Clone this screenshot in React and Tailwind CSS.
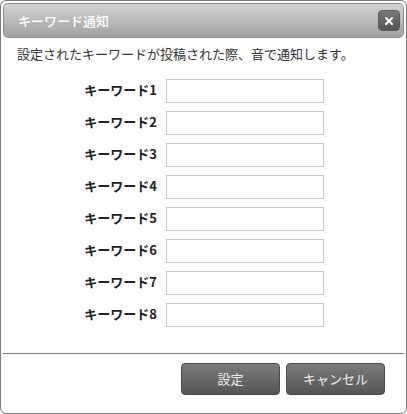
import { X } from 'lucide-react';

const keywords = [1, 2, 3, 4, 5, 6, 7, 8];

const App = () => {
  return (
    <div
      className="flex h-[414px] w-[407px] flex-col rounded-[6px] border border-[#7a7a7a] bg-white p-[2px] text-[#333]"
      style={{ fontFamily: '"Noto Sans CJK JP", "Noto Sans", sans-serif' }}
    >
      {/* ヘッダー */}
      <div className="flex h-[35px] items-center justify-between rounded-[5px] border border-[#8e8e8e] bg-gradient-to-b from-[#d2d2d2] to-[#a2a2a2] pl-[14px] pr-[3px]">
        <span className="text-[13px] font-medium text-white">キーワード通知</span>
        <button className="flex h-[21px] w-[22px] items-center justify-center rounded-[4px] border border-[#5a5a5a] bg-gradient-to-b from-[#777] to-[#555]">
          <X className="h-[12px] w-[12px] text-white" strokeWidth={4} />
        </button>
      </div>

      <p className="mt-[7px] pl-[14px] text-[13px] leading-[18px]">
        設定されたキーワードが投稿された際、音で通知します。
      </p>

      <div className="mt-[16px] flex flex-col gap-[8px]">
        {keywords.map((n) => (
          <div key={n} className="flex items-center">
            <label className="-mt-[3px] w-[155px] pr-[1px] text-right text-[13px] font-bold text-[#222]">
              キーワード{n}
            </label>
            <input
              type="text"
              className="ml-[8px] h-[24px] w-[158px] border border-[#c8c8c8] bg-white px-1 text-[13px] outline-none"
            />
          </div>
        ))}
      </div>

      <div className="flex-1" />

      <div className="border-t border-[#777]" />
      <div className="flex justify-end gap-[6px] pb-[16px] pr-[19px] pt-[9px]">
        <button className="h-[32px] w-[99px] rounded-[4px] border border-[#4a4a4a] bg-gradient-to-b from-[#7c7c7c] to-[#555] text-[13px] text-[#f0f0f0]">
          設定
        </button>
        <button className="h-[32px] w-[99px] rounded-[4px] border border-[#4a4a4a] bg-gradient-to-b from-[#7c7c7c] to-[#555] text-[13px] text-[#f0f0f0]">
          キャンセル
        </button>
      </div>
    </div>
  );
};

export default App;
